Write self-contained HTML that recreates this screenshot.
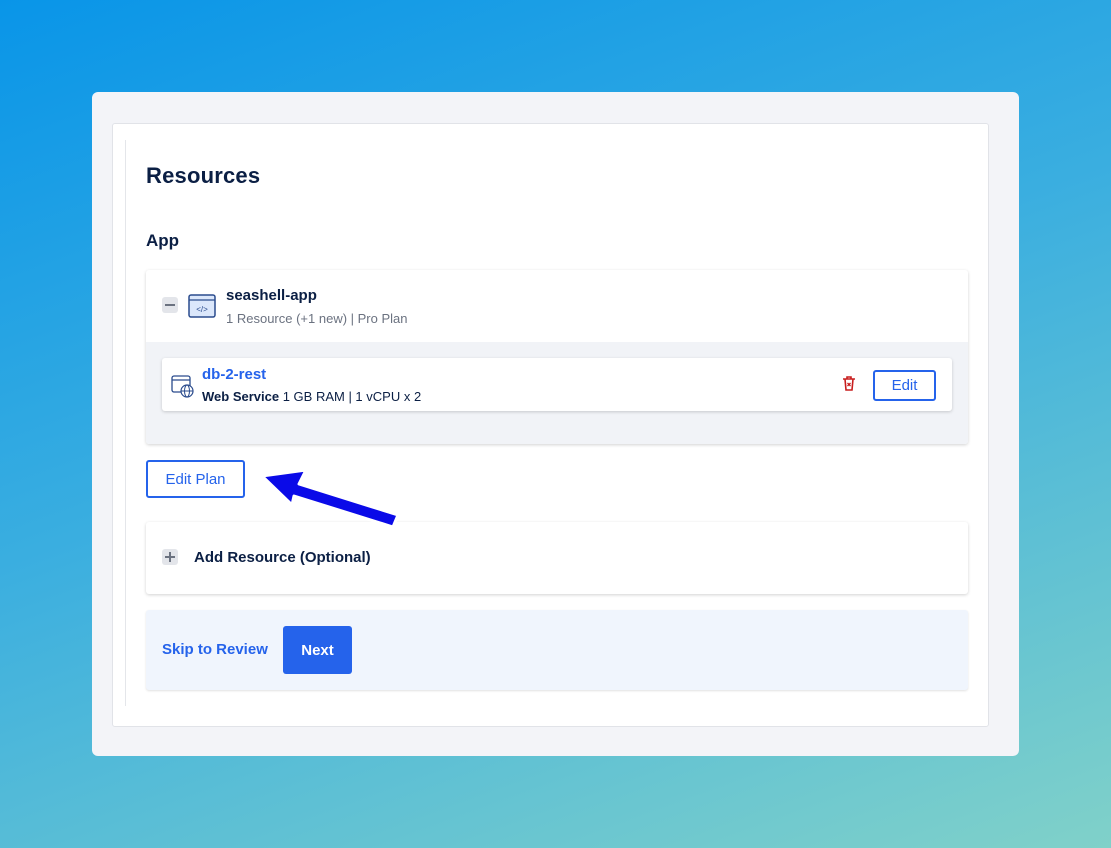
<!DOCTYPE html>
<html><head><style>
*{box-sizing:border-box;margin:0;padding:0}
body{width:1111px;height:848px;overflow:hidden;background:linear-gradient(160deg,#0995e8 0%,#3aaee0 45%,#80d1c9 100%);font-family:"Liberation Sans",sans-serif;position:relative;color:#0b1f44}
.abs{position:absolute}
.outer{left:92px;top:92px;width:927px;height:664px;background:#f3f4f8;border-radius:6px}
.inner{left:112px;top:123px;width:877px;height:604px;background:#fff;border:1px solid #e1e3e8;border-radius:3px}
.vline{left:125px;top:140px;width:1px;height:566px;background:#e4e6ea}
.card{background:#fff;box-shadow:0 1px 3px rgba(0,0,0,.18);border-radius:3px}
.btn{border:2px solid #2563eb;border-radius:3px;color:#2563eb;font-size:15px;display:flex;align-items:center;justify-content:center;background:#fff}
</style></head><body>
<div class="abs outer"></div>
<div class="abs inner"></div>
<div class="abs vline"></div>
<div class="abs" style="left:146px;top:163px;font-size:22px;color:#0b1f44;font-weight:bold;letter-spacing:0.2px">Resources</div>
<div class="abs" style="left:146px;top:231px;font-size:17px;font-weight:bold">App</div>

<div class="abs card" style="left:146px;top:270px;width:822px;height:174px;overflow:hidden">
  <div class="abs" style="left:0;top:72px;width:822px;height:102px;background:#f1f3f7"></div>
</div>
<div class="abs" style="left:162px;top:297px;width:16px;height:16px;background:#e3e5ea;border-radius:3px"><div style="margin:7px 3px;height:2px;background:#6b7280"></div></div>
<svg class="abs" style="left:188px;top:294px" width="28" height="24" viewBox="0 0 28 24"><rect x="1" y="1" width="26" height="22" rx="2" fill="#dbe7fb" stroke="#2a4b8d" stroke-width="1.5"/><line x1="1" y1="6" x2="27" y2="6" stroke="#2a4b8d" stroke-width="1.3"/><text x="14" y="18" font-size="8" text-anchor="middle" fill="#2a4b8d" font-family="Liberation Sans">&lt;/&gt;</text></svg>
<div class="abs" style="left:226px;top:287px;font-size:15px;color:#0b1f44;font-weight:bold">seashell-app</div>
<div class="abs" style="left:226px;top:311px;font-size:13px;color:#6b7280">1 Resource (+1 new) | Pro Plan</div>

<div class="abs card" style="left:162px;top:358px;width:790px;height:53px"></div>
<svg class="abs" style="left:171px;top:375px" width="24" height="24" viewBox="0 0 24 24"><rect x="1" y="1" width="18" height="16" rx="2" fill="none" stroke="#2a4b8d" stroke-width="1.3"/><line x1="1" y1="5" x2="19" y2="5" stroke="#2a4b8d" stroke-width="1.2"/><circle cx="16" cy="16" r="6" fill="#fff" stroke="#2a4b8d" stroke-width="1.2"/><ellipse cx="16" cy="16" rx="2.5" ry="6" fill="none" stroke="#2a4b8d"/><line x1="10" y1="16" x2="22" y2="16" stroke="#2a4b8d"/></svg>
<div class="abs" style="left:202px;top:366px;font-size:15px;color:#2563eb;font-weight:bold">db-2-rest</div>
<div class="abs" style="left:202px;top:389px;font-size:13px;color:#0b1f44"><b>Web Service</b> 1 GB RAM | 1 vCPU x 2</div>
<svg class="abs" style="left:842px;top:376px" width="14" height="15" viewBox="0 0 14 15"><path d="M1 3h12M5 3V1h4v2M3 3l1 11h6l1-11" fill="none" stroke="#c81e1e" stroke-width="1.6"/><path d="M5.5 7l3 3M8.5 7l-3 3" stroke="#c81e1e" stroke-width="1.3"/></svg>
<div class="abs btn" style="left:873px;top:370px;width:63px;height:31px">Edit</div>

<div class="abs btn" style="left:146px;top:460px;width:99px;height:38px">Edit Plan</div>
<svg class="abs" style="left:250px;top:460px;z-index:2" width="160" height="75" viewBox="250 460 160 75"><polygon points="262,476 306,470 299,484 398,515 393,527 294,496 292,505" fill="#0a0ae8" stroke="#fff" stroke-width="3" stroke-linejoin="round"/></svg>

<div class="abs card" style="left:146px;top:522px;width:822px;height:72px"></div>
<div class="abs" style="left:162px;top:549px;width:16px;height:16px;background:#e3e5ea;border-radius:3px"><div class="abs" style="left:3px;top:7px;width:10px;height:2px;background:#6b7280"></div><div class="abs" style="left:7px;top:3px;width:2px;height:10px;background:#6b7280"></div></div>
<div class="abs" style="left:194px;top:549px;font-size:15px;color:#0b1f44;font-weight:bold">Add Resource (Optional)</div>

<div class="abs" style="left:146px;top:610px;width:822px;height:80px;background:#f0f5fd;border-radius:3px;box-shadow:0 1px 2px rgba(0,0,0,.12)"></div>
<div class="abs" style="left:162px;top:641px;font-size:15px;color:#2563eb;font-weight:bold">Skip to Review</div>
<div class="abs" style="left:283px;top:626px;width:69px;height:48px;background:#2563eb;border-radius:3px;color:#fff;font-size:15px;font-weight:bold;display:flex;align-items:center;justify-content:center">Next</div>
</body></html>
